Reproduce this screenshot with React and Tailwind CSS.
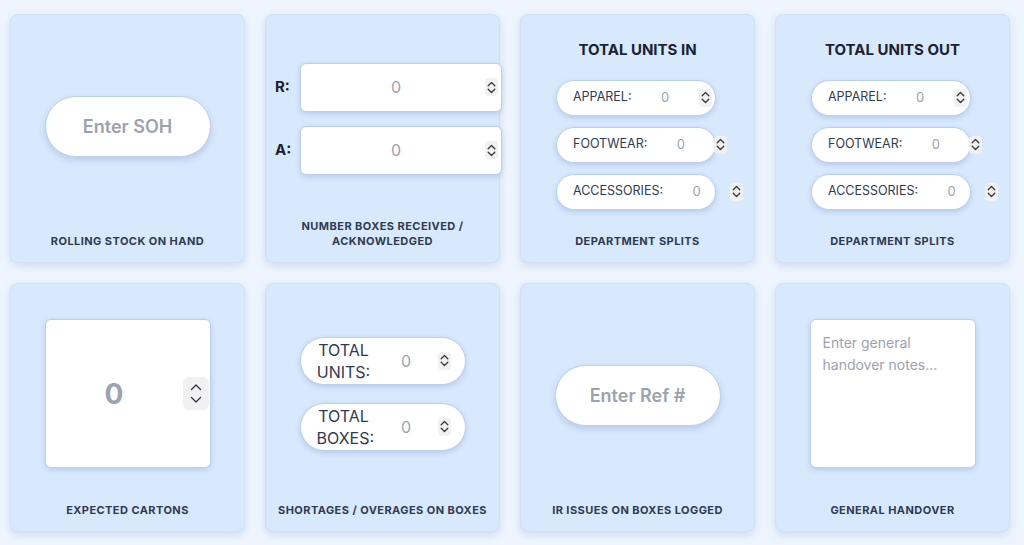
import { useState } from 'react'

const font = { fontFamily: 'Inter, "Noto Sans", sans-serif' }

function Spinner({ big = false }) {
  if (big) {
    return (
      <div className="flex h-[33px] w-[26px] shrink-0 flex-col items-center justify-center rounded-md bg-[#f1f1f3]">
        <svg width="12" height="8" viewBox="0 0 12 8" className="mb-[5px]">
          <path d="M1.5 6.5 6 2l4.5 4.5" fill="none" stroke="#3a3a3a" strokeWidth="1.4" strokeLinecap="round" strokeLinejoin="round" />
        </svg>
        <svg width="12" height="8" viewBox="0 0 12 8">
          <path d="M1.5 1.5 6 6l4.5-4.5" fill="none" stroke="#3a3a3a" strokeWidth="1.4" strokeLinecap="round" strokeLinejoin="round" />
        </svg>
      </div>
    )
  }
  return (
    <div className="flex h-[18px] w-[13px] shrink-0 flex-col items-center justify-center rounded-[4px] bg-[#f1f1f3]">
      <svg width="9" height="6" viewBox="0 0 9 6" className="mb-[1px]">
        <path d="M1.2 4.8 4.5 1.5l3.3 3.3" fill="none" stroke="#3a3a3a" strokeWidth="1.3" strokeLinecap="round" strokeLinejoin="round" />
      </svg>
      <svg width="9" height="6" viewBox="0 0 9 6">
        <path d="M1.2 1.2 4.5 4.5l3.3-3.3" fill="none" stroke="#3a3a3a" strokeWidth="1.3" strokeLinecap="round" strokeLinejoin="round" />
      </svg>
    </div>
  )
}

function Card({ label, children, top = null }) {
  return (
    <div className="flex h-[249px] w-[235px] flex-col rounded-lg border border-[#cfe0f7] bg-[#d8e8fd] shadow-[0_3px_8px_rgba(100,130,180,0.22)]">
      {top}
      <div className="flex flex-1 flex-col items-center justify-center">{children}</div>
      <p className="px-3 pb-[13px] text-center text-[11px] font-bold uppercase leading-[15px] tracking-[0.04em] text-[#2f3b52]">
        {label}
      </p>
    </div>
  )
}

function PillInput({ placeholder }) {
  const [v, setV] = useState('')
  return (
    <input
      value={v}
      onChange={(e) => setV(e.target.value)}
      placeholder={placeholder}
      className="mt-[4px] h-[61px] w-[166px] rounded-full border border-[#b9d0ef] bg-white text-center text-[18px] font-semibold text-gray-700 shadow-[0_3px_6px_rgba(90,120,170,0.25)] outline-none placeholder:text-[#9ca3af]"
    />
  )
}

function DeptRow({ name }) {
  return (
    <div className="flex h-9 w-[160px] items-center rounded-full border border-[#b9d0ef] bg-white pl-4 shadow-[0_2px_5px_rgba(90,120,170,0.25)]">
      <span className="shrink-0 text-[12.5px] text-[#2f3b52]">{name}:</span>
      <div className="flex w-[80px] shrink-0 items-center">
        <span className="flex-1 text-center text-[13px] text-[#9ca3af]">0</span>
        <Spinner />
      </div>
    </div>
  )
}

function DeptCard({ title }) {
  return (
    <Card
      label="Department Splits"
      top={<h2 className="pt-[25px] text-center text-[15px] font-bold leading-5 text-[#1a2233]">{title}</h2>}
    >
      <div className="-mt-[5px] flex flex-col gap-[11px] self-start pl-[35px]">
        <DeptRow name="APPAREL" />
        <DeptRow name="FOOTWEAR" />
        <DeptRow name="ACCESSORIES" />
      </div>
    </Card>
  )
}

function BoxRow({ label }) {
  return (
    <div className="flex items-center gap-[10px]">
      <span className="w-[15px] text-[15px] font-bold text-[#1a2233]">{label}:</span>
      <div className="flex h-[49px] w-[202px] items-center rounded-md border border-[#b9d0ef] bg-white pr-[3px] shadow-[0_2px_5px_rgba(90,120,170,0.25)]">
        <span className="flex-1 pl-[6px] text-center text-[16px] text-[#9ca3af]">0</span>
        <Spinner />
      </div>
    </div>
  )
}

function TotalRow({ a, b }) {
  return (
    <div className="flex h-[48px] w-[166px] items-center rounded-full border border-[#b9d0ef] bg-white pl-[16px] pr-[14px] shadow-[0_2px_5px_rgba(90,120,170,0.25)]">
      <span className="w-[54px] shrink-0 text-center text-[16px] leading-[22px] text-[#2f3b52]">
        {a}
        <br />
        {b}
      </span>
      <span className="flex-1 pl-[4px] text-center text-[16px] text-[#9ca3af]">0</span>
      <Spinner />
    </div>
  )
}

export default function App() {
  const [notes, setNotes] = useState('')
  return (
    <div style={font} className="min-h-[545px] w-[1024px] overflow-hidden bg-[#eef5fe]">
      <div className="grid grid-cols-[repeat(4,235px)] gap-5 pl-[10px] pt-[14px]">
        <Card label="Rolling Stock on Hand">
          <PillInput placeholder="Enter SOH" />
        </Card>

        <Card label="Number Boxes Received / Acknowledged">
          <div className="mt-[3px] flex flex-col gap-[14px] self-start pl-[9px]">
            <BoxRow label="R" />
            <BoxRow label="A" />
          </div>
        </Card>

        <DeptCard title="TOTAL UNITS IN" />
        <DeptCard title="TOTAL UNITS OUT" />

        <Card label="Expected Cartons">
          <div className="flex h-[149px] w-[166px] items-center rounded-md border border-[#b9d0ef] bg-white pr-[1px] shadow-[0_2px_5px_rgba(90,120,170,0.25)]">
            <span className="flex-1 text-center text-[28px] font-bold text-[#9ca3af]">0</span>
            <Spinner big />
          </div>
        </Card>

        <Card label="Shortages / Overages on Boxes">
          <div className="flex flex-col gap-[18px]">
            <TotalRow a="TOTAL" b="UNITS:" />
            <TotalRow a="TOTAL" b="BOXES:" />
          </div>
        </Card>

        <Card label="IR Issues on Boxes Logged">
          <PillInput placeholder="Enter Ref #" />
        </Card>

        <Card label="General Handover">
          <textarea
            value={notes}
            onChange={(e) => setNotes(e.target.value)}
            placeholder="Enter general handover notes..."
            className="h-[149px] w-[166px] resize-none rounded-md border border-[#b9d0ef] bg-white px-3 py-[12px] text-[14px] leading-[22px] text-gray-700 shadow-[0_2px_5px_rgba(90,120,170,0.25)] outline-none placeholder:text-[#9ca3af]"
          />
        </Card>
      </div>
    </div>
  )
}
